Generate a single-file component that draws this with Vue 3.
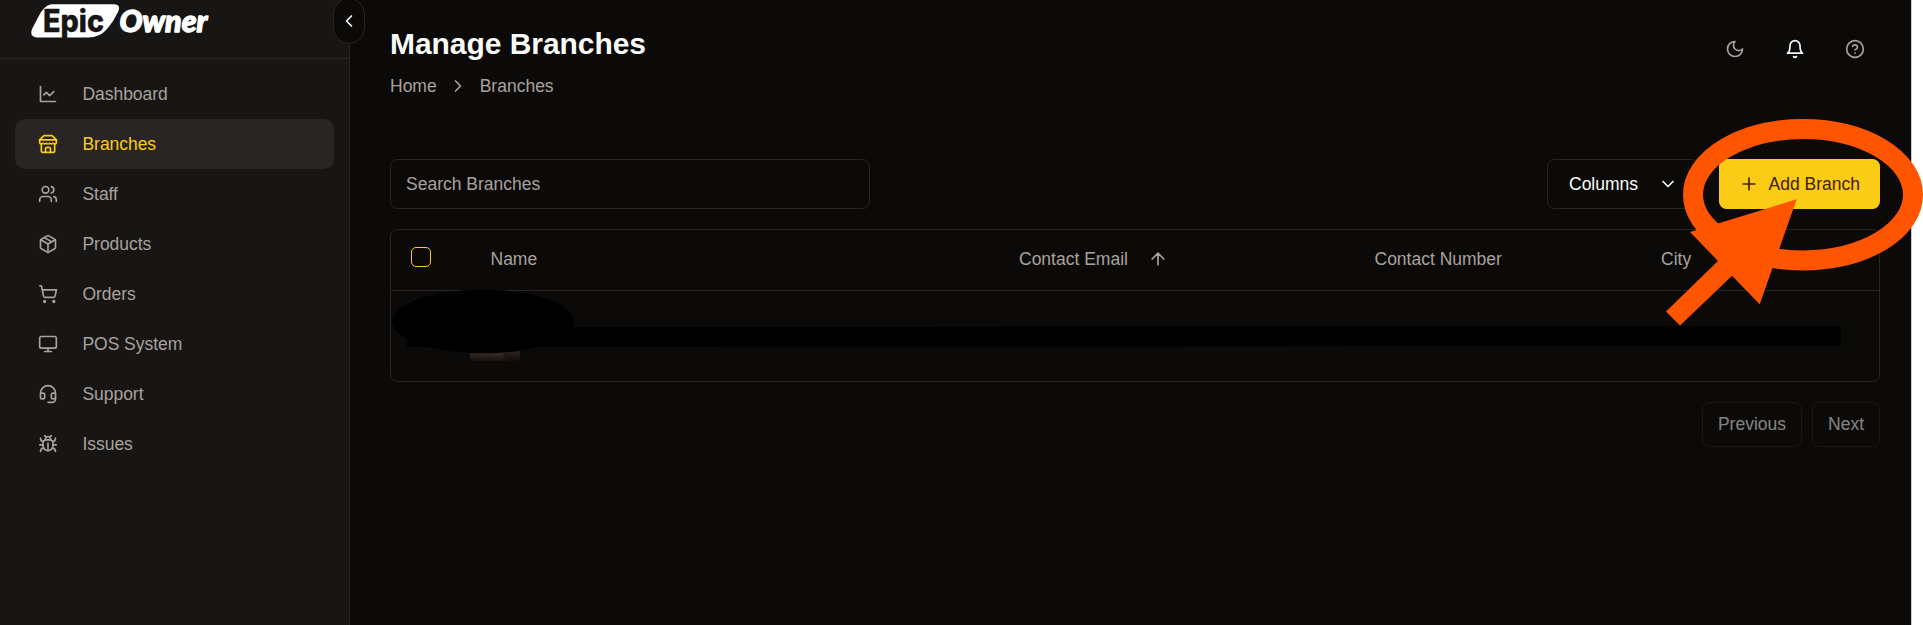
<script setup>
const nav = [
  { label: 'Dashboard', paths: ['M3 3v18h18', 'm19 9-5 5-4-4-3 3'] },
  { label: 'Branches', active: true, paths: ['m2 7 4.41-4.41A2 2 0 0 1 7.83 2h8.34a2 2 0 0 1 1.42.59L22 7', 'M4 12v8a2 2 0 0 0 2 2h12a2 2 0 0 0 2-2v-8', 'M15 22v-4a2 2 0 0 0-2-2h-2a2 2 0 0 0-2 2v4', 'M2 7h20', 'M22 7v3a2 2 0 0 1-2 2a2.7 2.7 0 0 1-1.59-.63.7.7 0 0 0-.82 0A2.7 2.7 0 0 1 16 12a2.7 2.7 0 0 1-1.59-.63.7.7 0 0 0-.82 0A2.7 2.7 0 0 1 12 12a2.7 2.7 0 0 1-1.59-.63.7.7 0 0 0-.82 0A2.7 2.7 0 0 1 8 12a2.7 2.7 0 0 1-1.59-.63.7.7 0 0 0-.82 0A2.7 2.7 0 0 1 4 12a2 2 0 0 1-2-2V7'] },
  { label: 'Staff', paths: ['M16 21v-2a4 4 0 0 0-4-4H6a4 4 0 0 0-4 4v2', 'M9 3a4 4 0 1 0 0 8a4 4 0 1 0 0-8', 'M22 21v-2a4 4 0 0 0-3-3.87', 'M16 3.13a4 4 0 0 1 0 7.75'] },
  { label: 'Products', paths: ['m7.5 4.27 9 5.15', 'M21 8a2 2 0 0 0-1-1.73l-7-4a2 2 0 0 0-2 0l-7 4A2 2 0 0 0 3 8v8a2 2 0 0 0 1 1.73l7 4a2 2 0 0 0 2 0l7-4A2 2 0 0 0 21 16Z', 'm3.3 7 8.7 5 8.7-5', 'M12 22V12'] },
  { label: 'Orders', paths: ['M8 20a1 1 0 1 0 0 2a1 1 0 1 0 0-2', 'M19 20a1 1 0 1 0 0 2a1 1 0 1 0 0-2', 'M2.05 2.05h2l2.66 12.42a2 2 0 0 0 2 1.58h9.78a2 2 0 0 0 1.95-1.57l1.65-7.43H5.12'] },
  { label: 'POS System', paths: ['M4 3h16a2 2 0 0 1 2 2v10a2 2 0 0 1-2 2H4a2 2 0 0 1-2-2V5a2 2 0 0 1 2-2Z', 'M8 21h8', 'M12 17v4'] },
  { label: 'Support', paths: ['M3 11h3a2 2 0 0 1 2 2v3a2 2 0 0 1-2 2H5a2 2 0 0 1-2-2v-5Zm0 0a9 9 0 1 1 18 0m0 0v5a2 2 0 0 1-2 2h-1a2 2 0 0 1-2-2v-3a2 2 0 0 1 2-2h3Z', 'M21 16v2a4 4 0 0 1-4 4h-5'] },
  { label: 'Issues', paths: ['m8 2 1.88 1.88', 'M14.12 3.88 16 2', 'M9 7.13v-1a3.003 3.003 0 1 1 6 0v1', 'M12 20c-3.3 0-6-2.7-6-6v-3a4 4 0 0 1 4-4h4a4 4 0 0 1 4 4v3c0 3.3-2.7 6-6 6', 'M12 20v-9', 'M6.53 9C4.6 8.8 3 7.1 3 5', 'M6 13H2', 'M3 21c0-2.1 1.7-3.9 3.8-4', 'M20.97 5c0 2.1-1.6 3.8-3.5 4', 'M22 13h-4', 'M17.2 17c2.1.1 3.8 1.9 3.8 4'] },
]
const tools = [
  { name: 'theme', paths: ['M12 3a6 6 0 0 0 9 9 9 9 0 1 1-9-9Z'] },
  { name: 'alerts', paths: ['M6 8a6 6 0 0 1 12 0c0 7 3 9 3 9H3s3-2 3-9', 'M10.3 21a1.94 1.94 0 0 0 3.4 0'] },
  { name: 'help', paths: ['M12 2a10 10 0 1 0 0 20a10 10 0 1 0 0-20', 'M9.09 9a3 3 0 0 1 5.83 1c0 2-3 3-3 3', 'M12 17h.01'] },
]
</script>

<template>
  <div class="app">
    <aside class="sidebar">
      <div class="brand">
        <svg class="logo" viewBox="0 0 190 42" width="190" height="42">
          <path d="M27 4.2H90Q97 4.500 94.500 11Q90 21 83 29Q76 37.500 64 37.500H12.500Q5 36.500 8 29L14 17.500Q19 6 27 4.200Z" fill="#fff" />
          <text x="19" y="32" class="epic" textLength="61" lengthAdjust="spacingAndGlyphs">Epic</text>
          <text x="95.500" y="31.500" class="owner" textLength="88" lengthAdjust="spacingAndGlyphs">Owner</text>
        </svg>
      </div>
      <nav class="nav">
        <a v-for="n in nav" :key="n.label" class="item" :class="{ active: n.active }">
          <svg class="icon" viewBox="0 0 24 24"><path v-for="p in n.paths" :key="p" :d="p" /></svg>
          <span>{{ n.label }}</span>
        </a>
      </nav>
      <button class="collapse"><svg class="icon" viewBox="0 0 24 24"><path d="m15 18-6-6 6-6" /></svg></button>
    </aside>

    <main class="main">
      <header class="top">
        <div>
          <h1>Manage Branches</h1>
          <div class="crumbs">
            <span>Home</span>
            <svg class="icon" viewBox="0 0 24 24"><path d="m9 18 6-6-6-6" /></svg>
            <span>Branches</span>
          </div>
        </div>
        <div class="tools">
          <svg v-for="t in tools" :key="t.name" class="icon" :class="t.name" viewBox="0 0 24 24"><path v-for="p in t.paths" :key="p" :d="p" /></svg>
        </div>
      </header>

      <div class="bar">
        <input class="search" placeholder="Search Branches" />
        <div class="actions">
          <button class="columns">Columns <svg class="icon" viewBox="0 0 24 24"><path d="m6 9 6 6 6-6" /></svg></button>
          <button class="add"><svg class="icon" viewBox="0 0 24 24"><path d="M5 12h14M12 5v14" /></svg>Add Branch</button>
        </div>
      </div>

      <section class="table">
        <div class="head">
          <i class="check"></i>
          <span>Name</span>
          <span class="sorted">Contact Email <svg class="icon" viewBox="0 0 24 24"><path d="m5 12 7-7 7 7M12 19V5" /></svg></span>
          <span>Contact Number</span>
          <span>City</span>
        </div>
        <div class="row"><i class="thumb"></i></div>
      </section>

      <footer class="pager">
        <button>Previous</button>
        <button>Next</button>
      </footer>
    </main>

    <svg class="marks" viewBox="0 0 1923 625" width="1923" height="625">
      <ellipse cx="483" cy="321.500" rx="91" ry="31.800" />
      <path d="M407 327H870L1280 326H1841V345.500L1400 346L407 347Z" />
      <ellipse class="ring" cx="1803" cy="194.700" rx="110" ry="65.700" />
      <path class="arrow" d="M1796.700 199.300L1690 232L1718 261L1666 311.500L1680 325.500L1732 275.700L1759.700 304.300Z" />
    </svg>
  </div>
</template>

<style>
body { background: #fff; overflow: hidden; }
</style>

<style scoped>
.app { position: relative; display: flex; width: 1912px; height: 625px; background: #0c0a09; color: #a8a29e; font: 17.5px/25px "Liberation Sans", Arial, sans-serif; border-right: 1px solid #c9c9c9; }
.app, .app * { box-sizing: border-box; }
button { font: inherit; color: inherit; background: none; border: 1px solid #292524; border-radius: 7.5px; padding: 0; display: flex; align-items: center; }
.icon { width: 20px; height: 20px; flex: none; fill: none; stroke: currentColor; stroke-width: 2; stroke-linecap: round; stroke-linejoin: round; }
.sidebar { position: relative; width: 350px; flex: none; background: #171614; border-right: 1px solid #292524; }
.brand { height: 59px; padding-left: 24px; border-bottom: 1px solid #292524; }
.logo { display: block; }
.epic { font: 800 31px Inter, sans-serif; fill: #171614; stroke: #171614; stroke-width: 0.4; }
.owner { font: italic 900 30px Lato, sans-serif; fill: #fff; stroke: #fff; stroke-width: 1.3; stroke-linejoin: round; }
.nav { padding: 10px 15px; }
.item { display: flex; align-items: center; height: 50px; padding-left: 23px; gap: 24.5px; border-radius: 10px; letter-spacing: -0.05px; }
.item.active { background: #292524; color: #facc15; }
.collapse { position: absolute; left: 333px; top: -2px; width: 32px; height: 46px; border-radius: 16px; background: #0c0a09; color: #fafaf9; justify-content: center; }
.main { flex: 1; padding: 25px 31px 0 40px; }
.top { display: flex; justify-content: space-between; height: 134px; }
h1 { margin: 0; font-size: 30px; line-height: 37.500px; letter-spacing: -0.05px; color: #fafaf9; }
.crumbs { display: flex; align-items: center; margin-top: 11px; gap: 11.5px; }
.tools { display: flex; gap: 40px; padding: 14px 15px 0 0; }
.alerts { color: #fafaf9; }
.bar { display: flex; justify-content: space-between; height: 50px; }
.search { width: 480px; padding: 0 15px; font: inherit; background: none; border: 1px solid #292524; border-radius: 7.5px; }
.search::placeholder { color: #a8a29e; opacity: 1; }
.actions { display: flex; gap: 20px; }
.columns { width: 152px; padding: 0 20px 0 21px; justify-content: space-between; color: #fafaf9; }
.add { width: 161px; padding-left: 20px; gap: 9.5px; background: #facc15; border: 0; color: #422006; white-space: nowrap; }
.table { margin-top: 20px; height: 153px; border: 1px solid #292524; border-radius: 7.5px; }
.head { display: grid; grid-template-columns: 79.5px 528.5px 355.5px 286.5px 1fr; padding: 0 0 2px 20px; height: 61px; align-items: center; border-bottom: 1px solid #292524; }
.check { width: 20px; height: 20px; margin-bottom: 4px; border: 1px solid #facc15; border-radius: 5px; }
.sorted { display: flex; align-items: center; gap: 20px; }
.row { height: 91px; padding: 20px 0 0 79px; }
.thumb { display: block; width: 50px; height: 50px; border-radius: 4px; background: linear-gradient(#0000 42px, #0c0a09cc), linear-gradient(90deg, #34281f, #3d2f26 65%, #241b17 70%, #2b201b); }
.pager { display: flex; justify-content: flex-end; gap: 10px; margin-top: 20px; opacity: 0.5; }
.pager button { height: 45px; padding: 0 15px; color: #fafaf9; }
.marks { position: absolute; left: 0; top: 0; pointer-events: none; }
.ring { fill: none; stroke: #ff5500; stroke-width: 20; }
.arrow { fill: #ff5500; }
</style>
